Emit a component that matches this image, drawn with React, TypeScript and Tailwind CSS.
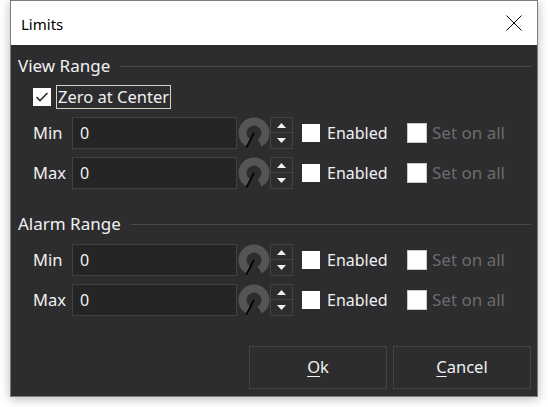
import React from "react";

const font = { fontFamily: '"Noto Sans", "Open Sans", sans-serif' };

function Knob() {
  return (
    <svg width="32" height="32" viewBox="0 0 32 32" className="block shrink-0">
      <path
        d="M10.25 25.96 A11.5 11.5 0 1 1 21.75 25.96"
        fill="none"
        stroke="#555557"
        strokeWidth="8"
      />
      <line x1="16" y1="16" x2="8.3" y2="30.5" stroke="#000" strokeWidth="1.6" />
    </svg>
  );
}

function Spinner() {
  return (
    <div className="flex flex-col w-[23px] h-[32px] shrink-0">
      <div className="h-[16px] border border-[#434346] flex items-center justify-center">
        <svg width="9" height="5" viewBox="0 0 9 5">
          <polygon points="0,5 9,5 4.5,0" fill="#f0f0f0" />
        </svg>
      </div>
      <div className="h-[16px] border border-t-0 border-[#434346] flex items-center justify-center">
        <svg width="9" height="5" viewBox="0 0 9 5">
          <polygon points="0,0 9,0 4.5,5" fill="#f0f0f0" />
        </svg>
      </div>
    </div>
  );
}

function Row({ label }: { label: string }) {
  return (
    <div className="flex items-center h-[32px] pl-[22px]">
      <div className="w-[39px] text-[16.5px] text-[#f1f1f1] leading-[22px]">{label}</div>
      <div className="w-[165px] h-[32px] border border-[#414143] bg-[#252527] flex items-center pl-[7px] text-[16px] text-[#f1f1f1]">
        0
      </div>
      <div className="ml-[1px]">
        <Knob />
      </div>
      <Spinner />
      <div className="ml-[9px] w-[18px] h-[18px] bg-white shrink-0" />
      <div className="ml-[7px] w-[80px] text-[16px] text-[#f1f1f1] leading-[22px]">Enabled</div>
      <div className="w-[20px] h-[20px] bg-white border border-[#c8c8c8] shrink-0" />
      <div className="ml-[5px] text-[17px] text-[#6b6b6b] leading-[22px]">Set on all</div>
    </div>
  );
}

function Header({ title }: { title: string }) {
  return (
    <div className="flex items-center h-[22px] pl-[7px] pr-[6px]">
      <span className="text-[17px] leading-[22px] text-[#f1f1f1]">{title}</span>
      <div className="flex-1 ml-[10px] h-px bg-[#4a4a4d]" />
    </div>
  );
}

export default function App() {
  return (
    <div className="w-[548px] h-[407px] bg-white overflow-hidden" style={font}>
      <div className="ml-[10px] w-[528px] h-[397px] border border-[#7c7c7c] shadow-[0_2px_10px_rgba(0,0,0,0.28)] flex flex-col">
        <div className="h-[44px] bg-white flex items-center justify-between pl-[10px] pr-[15px] shrink-0">
          <span className="text-[15px] text-black leading-[20px] mt-[2px]">Limits</span>
          <svg width="16" height="16" viewBox="0 0 16 16">
            <line x1="0.5" y1="0.5" x2="15.5" y2="15.5" stroke="#000" strokeWidth="1" />
            <line x1="15.5" y1="0.5" x2="0.5" y2="15.5" stroke="#000" strokeWidth="1" />
          </svg>
        </div>
        <div className="flex-1 bg-[#2d2d30] flex flex-col pt-[10px]">
          <Header title="View Range" />
          <div className="mt-[8px] h-[24px] flex items-center pl-[22px]">
            <div className="w-[18px] h-[18px] bg-white flex items-center justify-center">
              <svg width="14" height="12" viewBox="0 0 14 12">
                <polyline points="1.5,6 5,9.5 12.5,2" fill="none" stroke="#2d2d30" strokeWidth="1.6" />
              </svg>
            </div>
            <div className="ml-[5px] h-[24px] border border-[#d6d3c0] flex items-center px-[1px] text-[16.5px] text-[#f1f1f1] leading-[22px]">
              Zero at Center
            </div>
          </div>
          <div className="mt-[8px]">
            <Row label="Min" />
          </div>
          <div className="mt-[8px]">
            <Row label="Max" />
          </div>
          <div className="mt-[24px]">
            <Header title="Alarm Range" />
          </div>
          <div className="mt-[9px]">
            <Row label="Min" />
          </div>
          <div className="mt-[8px]">
            <Row label="Max" />
          </div>
          <div className="mt-auto mb-[7px] flex justify-end gap-[6px] pr-[6px]">
            <button className="w-[138px] h-[43px] border border-[#434346] bg-[#2d2d30] text-[16.5px] text-[#f1f1f1]">
              <span className="underline underline-offset-[3px]">O</span>k
            </button>
            <button className="w-[138px] h-[43px] border border-[#434346] bg-[#2d2d30] text-[16.5px] text-[#f1f1f1]">
              <span className="underline underline-offset-[3px]">C</span>ancel
            </button>
          </div>
        </div>
      </div>
    </div>
  );
}
